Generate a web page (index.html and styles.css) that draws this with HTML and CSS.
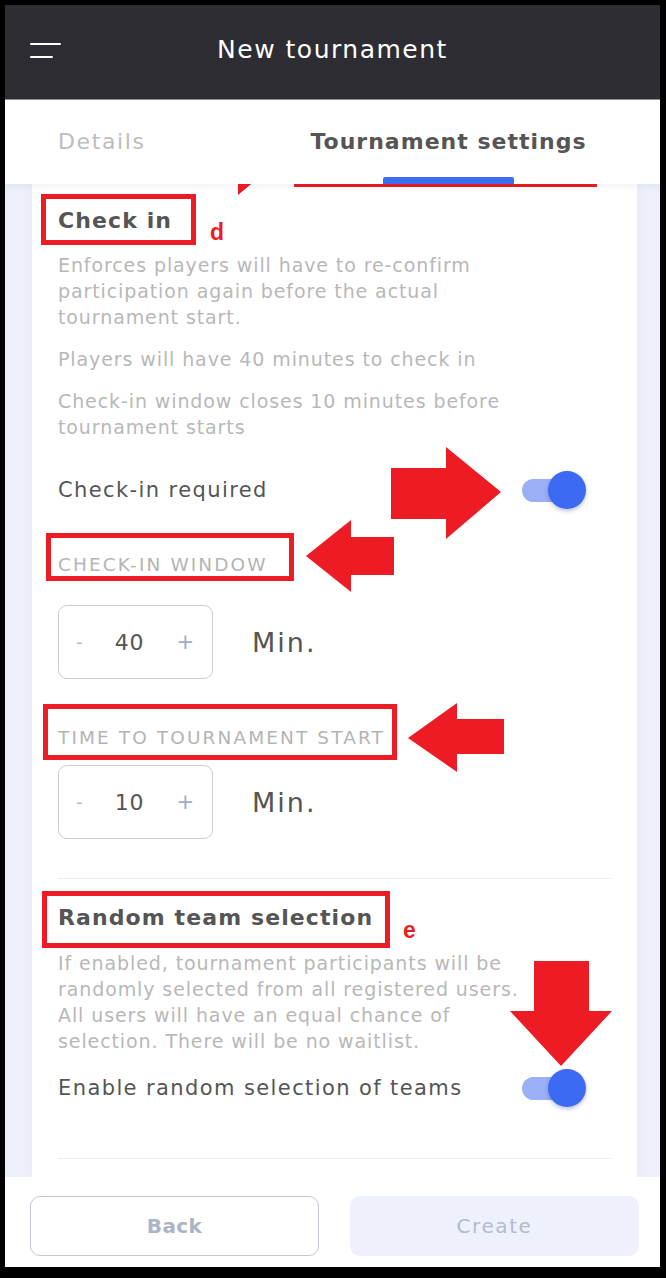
FILE: index.html
```html
<!DOCTYPE html>
<html lang="en">
<head>
    <meta charset="UTF-8">
    <meta name="viewport" content="width=device-width, initial-scale=1.0">
    <title>New tournament</title>
    <link rel="stylesheet" href="styles.css">
</head>
<body>
    <div class="screen">
        <header class="topbar">
            <button class="menu-btn" aria-label="Menu">
                <span class="line long"></span>
                <span class="line short"></span>
            </button>
            <h1>New tournament</h1>
        </header>

        <nav class="tabs">
            <div class="tab">Details</div>
            <div class="tab active">Tournament settings<span class="indicator"></span></div>
        </nav>

        <main class="content">
            <section class="card">
                <h2 class="section-title">Check in</h2>
                <p class="desc">Enforces players will have to re-confirm participation again before the actual tournament start.</p>
                <p class="desc">Players will have 40 minutes to check in</p>
                <p class="desc">Check-in window closes 10 minutes before tournament starts</p>

                <div class="toggle-row first">
                    <span>Check-in required</span>
                    <span class="switch on"><span class="track"></span><span class="knob"></span></span>
                </div>

                <div class="field-label label-window">CHECK-IN WINDOW</div>
                <div class="stepper-row">
                    <div class="stepper">
                        <span class="minus">-</span>
                        <span class="value">40</span>
                        <span class="plus">+</span>
                    </div>
                    <span class="unit">Min.</span>
                </div>

                <div class="field-label label-start">TIME TO TOURNAMENT START</div>
                <div class="stepper-row">
                    <div class="stepper">
                        <span class="minus">-</span>
                        <span class="value">10</span>
                        <span class="plus">+</span>
                    </div>
                    <span class="unit">Min.</span>
                </div>

                <hr class="divider">

                <h2 class="section-title random">Random team selection</h2>
                <p class="desc">If enabled, tournament participants will be randomly selected from all registered users. All users will have an equal chance of selection. There will be no waitlist.</p>

                <div class="toggle-row second">
                    <span>Enable random selection of teams</span>
                    <span class="switch on"><span class="track"></span><span class="knob"></span></span>
                </div>

                <hr class="divider last">
            </section>
        </main>

        <footer class="actions">
            <button class="btn btn-back">Back</button>
            <button class="btn btn-create" disabled>Create</button>
        </footer>
    </div>

    <!-- red annotations drawn on top of the screenshot -->
    <svg class="marks" width="666" height="1278" viewBox="0 0 666 1278">
        <g fill="none" stroke="#ed1c24" stroke-width="5">
            <rect x="296.5" y="110.5" width="298" height="74"/>
            <rect x="43.5" y="196.5" width="150" height="46"/>
            <rect x="48.5" y="535.5" width="243" height="43"/>
            <rect x="45.5" y="706.5" width="349" height="51"/>
            <rect x="44.5" y="893.5" width="343" height="52"/>
        </g>
        <g fill="#ed1c24">
            <polygon points="188,121 238,121 238,103 293,149 238,195 238,172 188,172"/>
            <polygon points="391,468 446,468 446,447 501,492 446,539 446,519 391,519"/>
            <polygon points="394,537 351,537 351,520 306,556 351,592 351,575 394,575"/>
            <polygon points="504,719 457,719 457,703 408,738 457,772 457,754 504,754"/>
            <polygon points="534,961 589,961 589,1011 612,1011 561,1066 510,1011 534,1011"/>
            <text x="210" y="240" class="mark-letter">d</text>
            <text x="403" y="938" class="mark-letter">e</text>
        </g>
    </svg>
</body>
</html>
```

FILE: styles.css
```css
* {
    box-sizing: border-box;
}
body {
    margin: 0;
    background: #000;
    font-family: "DejaVu Sans", "Open Sans", sans-serif;
    position: relative;
    width: 666px;
    height: 1278px;
    overflow: hidden;
}
.screen {
    margin: 5px 6px 0 5px;
    height: 1262px;
    display: flex;
    flex-direction: column;
    background: #fff;
    overflow: hidden;
}

/* top bar */
.topbar {
    height: 95px;
    flex: none;
    background: #2e2d33;
    border-bottom: 1px solid #8d8d92;
    display: flex;
    align-items: center;
}
.menu-btn {
    background: none;
    border: none;
    padding: 0;
    margin: 0 0 4px 25px;
    width: 32px;
    display: flex;
    flex-direction: column;
    gap: 11px;
}
.menu-btn .line {
    display: block;
    height: 2px;
    background: #fff;
    border-radius: 1px;
}
.menu-btn .long {
    width: 31px;
}
.menu-btn .short {
    width: 23px;
}
.topbar h1 {
    flex: 1;
    margin: 0 57px 5px 0;
    text-align: center;
    color: #fff;
    font-weight: 400;
    font-size: 25px;
    letter-spacing: 1.5px;
}

/* tabs */
.tabs {
    height: 84px;
    flex: none;
    display: flex;
    padding-left: 53px;
    gap: 165px;
    background: #fff;
    box-shadow: 0 3px 6px rgba(40, 50, 90, 0.06);
    position: relative;
    z-index: 2;
}
.tab {
    display: flex;
    flex-direction: column;
    padding-top: 29px;
    font-size: 22px;
    color: #bdbdbd;
    letter-spacing: 1.6px;
}
.tab.active {
    color: #555;
    font-weight: 700;
    letter-spacing: 1px;
}
.indicator {
    display: block;
    width: 131px;
    height: 7px;
    margin: auto auto 0;
    background: #3f6df2;
    border-radius: 2px 2px 0 0;
}

/* content */
.content {
    flex: 1;
    background: #edf0f8;
    padding: 0 23px 0 27px;
    overflow: hidden;
}
.card {
    background: #fff;
    height: 100%;
    padding: 23px 26px 0;
    box-shadow: 0 0 8px rgba(60, 70, 110, 0.05);
}
.section-title {
    margin: 0;
    font-size: 22px;
    line-height: 28px;
    color: #555;
    font-weight: 700;
    letter-spacing: 1.1px;
}
.desc {
    margin: 16px 0 0;
    max-width: 482px;
    font-size: 19px;
    line-height: 26px;
    color: #b8b8b8;
    letter-spacing: 0.9px;
}
.section-title + .desc {
    margin-top: 17px;
}
.toggle-row {
    display: flex;
    align-items: center;
    justify-content: space-between;
    height: 40px;
    padding-right: 25px;
    font-size: 21px;
    color: #555;
    letter-spacing: 1.4px;
}
.toggle-row.first {
    margin-top: 30px;
}
.toggle-row.second {
    margin-top: 14px;
}
.switch {
    position: relative;
    width: 64px;
    height: 38px;
}
.switch .track {
    position: absolute;
    left: 0;
    top: 8px;
    width: 46px;
    height: 23px;
    border-radius: 12px;
    background: #9bb0f6;
}
.switch .knob {
    position: absolute;
    left: 26px;
    top: 0;
    width: 38px;
    height: 38px;
    border-radius: 50%;
    background: #3d6af2;
    box-shadow: 0 2px 4px rgba(30, 50, 120, 0.3);
}
.field-label {
    font-size: 18.5px;
    line-height: 20px;
    color: #b4b4b4;
    letter-spacing: 2.1px;
}
.label-window {
    margin-top: 45px;
}
.label-start {
    margin-top: 49px;
}
.stepper-row {
    display: flex;
    align-items: center;
    gap: 39px;
    margin-top: 30px;
}
.label-start + .stepper-row {
    margin-top: 17px;
}
.stepper {
    width: 155px;
    height: 74px;
    border: 1.5px solid #c8ccdb;
    border-radius: 9px;
    display: flex;
    align-items: center;
    justify-content: space-between;
    padding: 0 18px 0 17px;
}
.stepper .minus {
    color: #b8bccb;
    font-size: 19px;
}
.stepper .value {
    color: #555;
    font-size: 22px;
    letter-spacing: 1px;
}
.stepper .plus {
    color: #a2aacb;
    font-size: 21px;
}
.unit {
    font-size: 27px;
    color: #555;
    letter-spacing: 2px;
}
.divider {
    border: none;
    border-top: 1px solid #eceef3;
    margin: 39px 0 0;
}
.section-title.random {
    margin-top: 25px;
}
.section-title.random + .desc {
    margin-top: 18px;
}
.divider.last {
    margin-top: 50px;
}

/* bottom actions */
.actions {
    height: 90px;
    flex: none;
    display: grid;
    grid-template-columns: 289px 289px;
    gap: 31px;
    padding: 19px 0 11px 25px;
    background: #fff;
}
.btn {
    font-family: inherit;
    font-size: 20px;
    border-radius: 10px;
    cursor: pointer;
    letter-spacing: 0.4px;
}
.btn-back {
    background: #fff;
    border: 1.5px solid #c3c7d6;
    color: #adb3c7;
    font-weight: 700;
}
.btn-create {
    background: #eef1fb;
    border: none;
    color: #b5bace;
    letter-spacing: 1.6px;
}

/* annotation layer */
.marks {
    position: absolute;
    left: 0;
    top: 0;
    pointer-events: none;
}
.mark-letter {
    font-family: "Liberation Sans", Arial, sans-serif;
    font-weight: 700;
    font-size: 23px;
}
```
